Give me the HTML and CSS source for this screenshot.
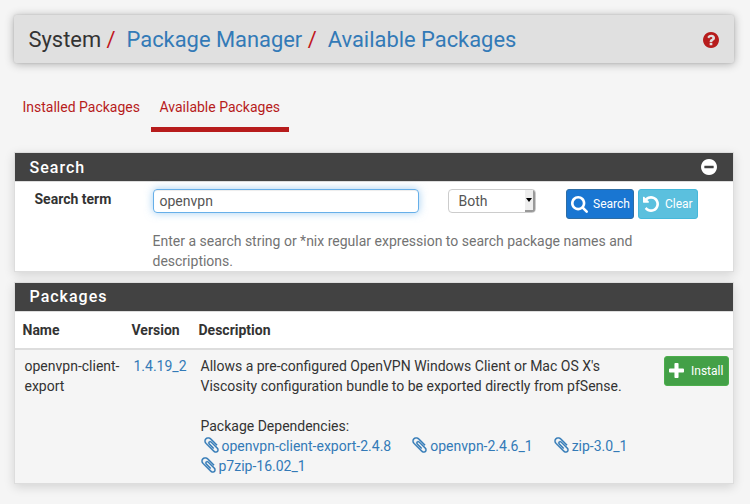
FILE: index.html
```html
<!DOCTYPE html>
<html lang="en">
<head>
<meta charset="utf-8">
<title>Package Manager</title>
<link rel="stylesheet" href="styles.css">
</head>
<body>
<svg class="sprite" aria-hidden="true">
  <symbol id="question" viewBox="128 128 1536 1536"><path d="M1024 1376v-192q0-14-9-23t-23-9h-192q-14 0-23 9t-9 23v192q0 14 9 23t23 9h192q14 0 23-9t9-23zm256-672q0-88-55.5-163t-138.5-116-170-41q-243 0-371 213-15 24 8 42l132 100q7 6 19 6 16 0 25-12 53-68 86-92 34-24 86-24 48 0 85.5 26t37.5 59q0 38-20 61t-68 45q-63 28-115.5 86.5t-52.5 125.5v36q0 14 9 23t23 9h192q14 0 23-9t9-23q0-19 21.5-49.5t54.5-49.5q32-18 49-28.5t46-35 44.5-48 28-60.5 12.5-81zm384 192q0 209-103 385.5t-279.5 279.5-385.5 103-385.5-103-279.5-279.5-103-385.5 103-385.5 279.5-279.5 385.5-103 385.5 103 279.5 279.5 103 385.5z"/></symbol>
  <symbol id="minus" viewBox="128 128 1536 1536"><path d="M1344 960v-128q0-26-19-45t-45-19h-768q-26 0-45 19t-19 45v128q0 26 19 45t45 19h768q26 0 45-19t19-45zm320-64q0 209-103 385.5t-279.5 279.5-385.5 103-385.5-103-279.5-279.5-103-385.5 103-385.5 279.5-279.5 385.5-103 385.5 103 279.5 279.5 103 385.5z"/></symbol>
  <symbol id="search" viewBox="64 128 1664 1664"><path d="M1216 832q0-185-131.5-316.5t-316.5-131.5-316.5 131.5-131.5 316.5 131.5 316.5 316.5 131.5 316.5-131.5 131.5-316.5zm512 832q0 52-38 90t-90 38q-54 0-90-38l-343-342q-179 124-399 124-143 0-273.5-55.5t-225-150-150-225-55.5-273.5 55.5-273.5 150-225 225-150 273.5-55.5 273.5 55.5 225 150 150 225 55.5 273.5q0 220-124 399l343 343q37 37 37 90z"/></symbol>
  <symbol id="undo" viewBox="128 128 1536 1536"><path d="M1664 896q0 156-61 298t-164 245-245 164-298 61q-172 0-327-72.5t-264-204.5q-7-10-6.5-22.5t8.5-20.5l137-138q10-9 25-9 16 2 23 12 73 95 179 147t225 52q104 0 198.5-40.5t163.5-109.5 109.5-163.5 40.5-198.5-40.5-198.5-109.5-163.5-163.5-109.5-198.5-40.5q-98 0-188 35.5t-160 101.5l137 138q31 30 14 69-17 40-59 40h-448q-26 0-45-19t-19-45v-448q0-42 40-59 39-17 69 14l130 129q107-101 244.5-156.5t284.5-55.5q156 0 298 61t245 164 164 245 61 298z"/></symbol>
  <symbol id="plus" viewBox="192 128 1408 1408"><path d="M1600 736v192q0 40-28 68t-68 28h-416v416q0 40-28 68t-68 28h-192q-40 0-68-28t-28-68v-416h-416q-40 0-68-28t-28-68v-192q0-40 28-68t68-28h416v-416q0-40 28-68t68-28h192q40 0 68 28t28 68v416h416q40 0 68 28t28 68z"/></symbol>
  <symbol id="clip" viewBox="180 114 1432 1564"><path d="M1596 1385q0 117-79 196t-196 79q-135 0-235-100l-777-776q-113-115-113-271 0-159 110-270t269-111q158 0 273 113l605 606q10 10 10 22 0 16-30.5 46.5t-46.5 30.5q-13 0-23-10l-606-607q-79-77-181-77-106 0-179 75t-73 181q0 105 76 181l776 777q63 63 145 63 64 0 106-42t42-106q0-82-63-145l-581-581q-26-24-60-24-29 0-48 19t-19 48q0 32 25 59l410 410q10 10 10 22 0 16-31 47t-47 31q-12 0-22-10l-410-410q-63-61-63-149 0-82 57-139t139-57q88 0 149 63l581 581q100 98 100 235z"/></symbol>
</svg>
<header class="page-header">
  <div class="crumbs"><span>System</span><i>/</i><a>Package Manager</a><i>/</i><a>Available Packages</a></div>
  <svg class="icon help"><use href="#question"/></svg>
</header>
<nav class="tabs">
  <a class="tab">Installed Packages</a>
  <a class="tab active">Available Packages</a>
</nav>
<section class="panel search">
  <h2><span>Search</span><svg class="icon"><use href="#minus"/></svg></h2>
  <div class="form">
    <label>Search term</label>
    <div class="fields">
      <div class="controls">
        <div class="input">openvpn</div>
        <div class="select"><span>Both</span><b class="arrow"></b></div>
        <a class="btn primary"><svg class="icon lens"><use href="#search"/></svg>Search</a>
        <a class="btn info"><svg class="icon"><use href="#undo"/></svg>Clear</a>
      </div>
      <p>Enter a search string or *nix regular expression to search package names and descriptions.</p>
    </div>
  </div>
</section>
<section class="panel packages">
  <h2><span>Packages</span></h2>
  <div class="row head"><span>Name</span><span>Version</span><span>Description</span></div>
  <div class="row item">
    <span>openvpn-client-<br>export</span>
    <a>1.4.19_2</a>
    <div class="desc">
      Allows a pre-configured OpenVPN Windows Client or Mac OS X's<br>Viscosity configuration bundle to be exported directly from pfSense.<br><br>Package Dependencies:
      <div class="deps">
        <a class="first"><svg class="clip"><use href="#clip"/></svg>openvpn-client-export-2.4.8</a>
        <a><svg class="clip"><use href="#clip"/></svg>openvpn-2.4.6_1</a>
        <a><svg class="clip"><use href="#clip"/></svg>zip-3.0_1</a>
        <a><svg class="clip"><use href="#clip"/></svg>p7zip-16.02_1</a>
      </div>
    </div>
    <a class="btn success"><svg class="icon plus"><use href="#plus"/></svg>Install</a>
  </div>
</section>
</body>
</html>
```
FILE: styles.css
```css
* { box-sizing: border-box; }
body {
  margin: 0;
  padding: 15px 16px 0 14px;
  height: 504px;
  overflow: hidden;
  background: #f5f5f5;
  color: #333;
  font: 14px/20px Roboto, sans-serif;
}
.sprite { position: absolute; width: 0; height: 0; }
a { color: #337ab7; }
svg { fill: currentColor; flex: none; display: block; }
.icon { width: 16px; height: 16px; }

.page-header {
  display: flex;
  align-items: center;
  justify-content: space-between;
  width: 720px;
  height: 48px;
  padding: 2px 15px 0 14.5px;
  background: #e0e0e0;
  border-radius: 2px;
  box-shadow: 0 1px 10px rgba(0, 0, 0, .3), 0 0 2px rgba(0, 0, 0, .15);
}
.crumbs { display: flex; font-size: 21.9px; line-height: 30px; }
.crumbs i { font-style: normal; color: #c1171d; margin: 0 11px 0 5.4px; }
.help { color: #b71c1c; }

.tabs { display: flex; height: 69px; padding-top: 24px; }
.tab {
  height: 45px;
  padding: 10px 9px 0 8.5px;
  color: #b71c1c;
  border-bottom: 5px solid transparent;
  margin-right: 2px;
}
.tab.active { border-color: #b71c1c; }

.panel {
  width: 720px;
  border: 1px solid #ddd;
  background: #fff;
  box-shadow: 0 3px 10px rgba(0, 0, 0, .14);
}
.search { margin-top: 20px; height: 120px; }
.packages { margin-top: 10px; height: 202px; }
h2 {
  display: flex;
  justify-content: space-between;
  align-items: center;
  height: 29px;
  margin: 0;
  padding: 0 16.5px 0 14.5px;
  background: #424242;
  border-bottom: 1px solid #ddd;
  color: #fff;
  font-size: 16px;
  font-weight: 500;
  letter-spacing: 1px;
}
.search h2 span { padding-top: 2px; }
.form { display: flex; padding: 7px 0 0 19.5px; }
label { width: 118px; font-weight: 700; }
.controls { display: flex; align-items: flex-start; height: 41px; }
.input {
  width: 266px;
  height: 24px;
  padding: 1px 6px;
  border: 1px solid #66afe9;
  border-radius: 4px;
  color: #555;
  box-shadow: inset 0 1px 1px rgba(0, 0, 0, .075), 0 0 8px rgba(102, 175, 233, .6);
}
.select {
  display: flex;
  justify-content: space-between;
  width: 88px;
  height: 24px;
  margin: 0 30px 0 29.5px;
  padding-left: 9.5px;
  border: 1px solid #ccc;
  border-radius: 4px;
  color: #555;
  overflow: hidden;
  line-height: 22px;
}
.arrow {
  display: flex;
  align-items: center;
  justify-content: center;
  width: 10px;
  background: #eee;
  border-right: 2px solid #999;
  border-bottom: 2px solid #999;
}
.arrow::after {
  content: "";
  border: 3px solid transparent;
  border-top: 4px solid #000;
  border-bottom: 0;
}
.form p { width: 500px; margin: 1px 0 0; color: #737373; }

.btn {
  display: flex;
  align-items: center;
  height: 30px;
  border: 1px solid;
  border-radius: 3px;
  color: #fff;
  font-size: 12px;
}
.primary { width: 68px; padding-left: 4px; background: #1976d2; border-color: #2e6da4; }
.primary .icon { width: 17px; height: 17px; margin-right: 5px; }
.info { width: 60px; margin-left: 4px; padding-left: 4px; background: #5bc0de; border-color: #46b8da; }
.info .icon { margin-right: 6px; }
.success { width: 65px; padding-left: 4px; background: #43a047; border-color: #4cae4c; }
.success .icon { width: 15px; height: 15px; margin: -2px 7px 0 0; }

.row { display: grid; grid-template-columns: 109px 67px 1fr auto; }
.head { height: 38px; padding: 8px 8px 0 7.5px; border-bottom: 2px solid #ddd; font-weight: 700; }
.item { height: 133px; padding: 6px 4px 0 9.5px; background: #f5f5f5; align-items: start; }
.deps { display: flex; flex-wrap: wrap; width: 450px; }
.deps a { display: flex; align-items: center; margin-right: 21px; }
.deps .first { margin-left: 3px; }
.clip { width: 15px; height: 16px; margin: -3px 3px 0 0; stroke: currentColor; stroke-width: 22; }
```
